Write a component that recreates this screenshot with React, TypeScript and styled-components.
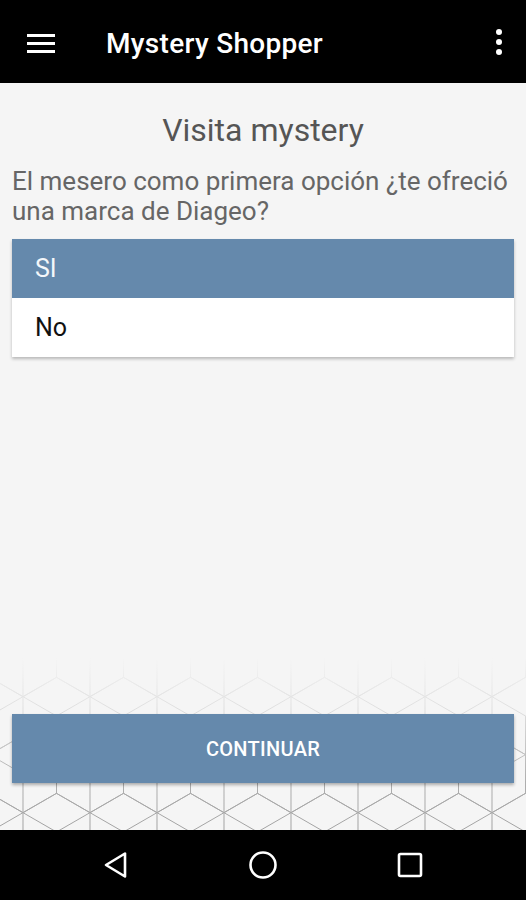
import { FC } from "react"
import styled, { createGlobalStyle } from "styled-components"

const BLUE = "#6589ac"

// tumbling-block tile for the footer background
const hexPath = (cx: number, cy: number, w = 67) => {
  const r = w / Math.sqrt(3)
  const h = w / 2
  const p = [
    [cx, cy - r],
    [cx + h, cy - r / 2],
    [cx + h, cy + r / 2],
    [cx, cy + r],
    [cx - h, cy + r / 2],
    [cx - h, cy - r / 2],
  ]
  const outline = `M${p.map((v) => v.join(",")).join("L")}Z`
  const inner = `M${cx},${cy}L${cx},${cy + r}M${cx},${cy}L${cx - h},${cy - r / 2}M${cx},${cy}L${cx + h},${cy - r / 2}`
  return outline + inner
}

const tileSvg = () => {
  const w = 67
  const hgt = w * Math.sqrt(3)
  const centers = [
    [0, 0],
    [w, 0],
    [w / 2, hgt / 2],
    [0, hgt],
    [w, hgt],
  ]
  const d = centers.map(([x, y]) => hexPath(x, y, w)).join("")
  const svg = `<svg xmlns="http://www.w3.org/2000/svg" width="${w}" height="${hgt.toFixed(2)}" viewBox="0 0 ${w} ${hgt.toFixed(2)}"><path d="${d}" fill="none" stroke="#a2a2a2" stroke-width="1"/></svg>`
  return `url("data:image/svg+xml,${encodeURIComponent(svg)}")`
}

const GlobalStyle = createGlobalStyle`
  html, body {
    margin: 0;
    padding: 0;
    background: #000;
  }
  * {
    box-sizing: border-box;
  }
`

const Screen = styled.div`
  width: 526px;
  height: 900px;
  display: flex;
  flex-direction: column;
  font-family: Roboto, "Noto Sans", sans-serif;
  background: #f5f5f5;
`

const TopBar = styled.header`
  height: 83px;
  flex-shrink: 0;
  background: #000;
  display: flex;
  align-items: center;
  padding: 0 22px 0 26px;
  color: #fff;
`

const Title = styled.h1`
  margin: 3px 0 0 50px;
  flex: 1;
  font-size: 28px;
  font-weight: 500;
  letter-spacing: 0.3px;
`

const Main = styled.main`
  flex: 1;
  display: flex;
  flex-direction: column;
`

const Body = styled.section`
  flex: 1;
  padding: 0 12px;
`

const Heading = styled.h2`
  margin: 28px 0 0;
  text-align: center;
  font-size: 32px;
  font-weight: 400;
  line-height: 38px;
  color: #555;
`

const Question = styled.p`
  margin: 17px 0 0;
  font-size: 26px;
  line-height: 30px;
  color: #666;
`

const OptionList = styled.ul`
  list-style: none;
  margin: 13px 0 0;
  padding: 0;
  background: #fff;
  box-shadow: 0 2px 3px rgba(0, 0, 0, 0.25);
`

const Option = styled.li<{ $active?: boolean }>`
  height: 59px;
  display: flex;
  align-items: center;
  padding: 0 23px;
  font-size: 25px;
  background: ${(p) => (p.$active ? BLUE : "#fff")};
  color: ${(p) => (p.$active ? "#f4f7fa" : "#111")};
`

const Footer = styled.footer`
  height: 172px;
  flex-shrink: 0;
  padding: 56px 12px 0;
  background-image: linear-gradient(
      to bottom,
      #f5f5f5 0%,
      rgba(245, 245, 245, 0.75) 28%,
      rgba(245, 245, 245, 0.15) 72%,
      rgba(245, 245, 245, 0) 100%
    ),
    ${tileSvg()};
  background-repeat: no-repeat, repeat;
  background-size: 100% 100%, 67px 116px;
  background-position: 0 0, 23px 0;
`

const Continue = styled.button`
  width: 100%;
  height: 69px;
  border: none;
  background: ${BLUE};
  color: #fff;
  font-family: Roboto, "Noto Sans", sans-serif;
  font-size: 20px;
  font-weight: 500;
  letter-spacing: 0.3px;
  box-shadow: 0 2px 3px rgba(0, 0, 0, 0.3);
`

const NavBar = styled.nav`
  height: 70px;
  flex-shrink: 0;
  background: #000;
  display: flex;
  align-items: center;
  justify-content: center;
  gap: 117px;
`

const IconBtn = styled.span`
  display: flex;
`

const MenuIcon: FC = () => (
  <svg width="30" height="24" viewBox="0 0 30 24">
    <rect x="1" y="4" width="28" height="3" fill="#fff" />
    <rect x="1" y="12" width="28" height="3" fill="#fff" />
    <rect x="1" y="20" width="28" height="3" fill="#fff" />
  </svg>
)

const MoreIcon: FC = () => (
  <svg width="10" height="30" viewBox="0 0 10 30">
    <circle cx="5" cy="5" r="3" fill="#fff" />
    <circle cx="5" cy="15" r="3" fill="#fff" />
    <circle cx="5" cy="25" r="3" fill="#fff" />
  </svg>
)

const BackIcon: FC = () => (
  <svg width="30" height="30" viewBox="0 0 30 30">
    <path d="M24 3.5 L24 26.5 L5 15 Z" fill="none" stroke="#fff" strokeWidth="2.6" strokeLinejoin="round" />
  </svg>
)

const HomeIcon: FC = () => (
  <svg width="30" height="30" viewBox="0 0 30 30">
    <circle cx="15" cy="15" r="12.5" fill="none" stroke="#fff" strokeWidth="2.6" />
  </svg>
)

const RecentIcon: FC = () => (
  <svg width="30" height="30" viewBox="0 0 30 30">
    <rect x="4" y="4" width="22" height="22" rx="1.5" fill="none" stroke="#fff" strokeWidth="2.6" />
  </svg>
)

export default function App() {
  return (
    <>
      <GlobalStyle />
      <Screen>
        <TopBar>
          <IconBtn>
            <MenuIcon />
          </IconBtn>
          <Title>Mystery Shopper</Title>
          <IconBtn>
            <MoreIcon />
          </IconBtn>
        </TopBar>
        <Main>
          <Body>
            <Heading>Visita mystery</Heading>
            <Question>El mesero como primera opción ¿te ofreció una marca de Diageo?</Question>
            <OptionList>
              <Option $active>SI</Option>
              <Option>No</Option>
            </OptionList>
          </Body>
          <Footer>
            <Continue>CONTINUAR</Continue>
          </Footer>
        </Main>
        <NavBar>
          <IconBtn>
            <BackIcon />
          </IconBtn>
          <IconBtn>
            <HomeIcon />
          </IconBtn>
          <IconBtn>
            <RecentIcon />
          </IconBtn>
        </NavBar>
      </Screen>
    </>
  )
}
